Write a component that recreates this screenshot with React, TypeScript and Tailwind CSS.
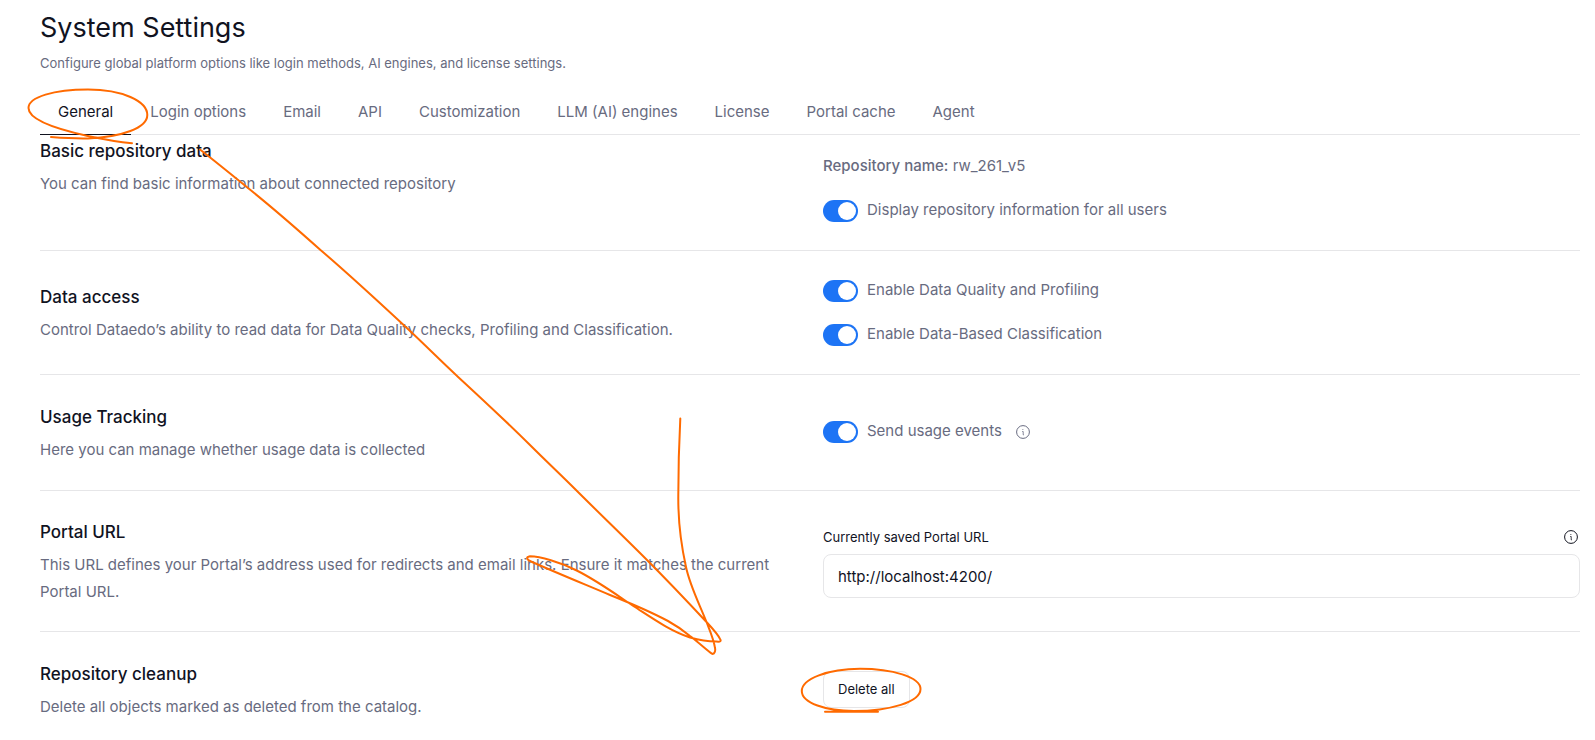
import { useState, type ReactNode } from 'react';

const tabs = [
  'General',
  'Login options',
  'Email',
  'API',
  'Customization',
  'LLM (AI) engines',
  'License',
  'Portal cache',
  'Agent',
];

function InfoIcon() {
  return (
    <svg viewBox="0 0 14 14" className="size-[14px] shrink-0" fill="none" aria-hidden="true">
      <circle cx="7" cy="7" r="6.4" stroke="currentColor" strokeWidth="1" />
      <path d="M6.2 6.5H7.2V9.8H8" stroke="currentColor" strokeWidth="0.8" />
      <circle cx="6.9" cy="4.4" r="0.5" fill="currentColor" />
    </svg>
  );
}

function Toggle({ label, info }: { label: string; info?: boolean }) {
  const [on, setOn] = useState(true);
  return (
    <div className="flex items-center gap-[14px]">
      <label className="flex cursor-pointer items-center gap-[9px]">
        <input
          type="checkbox"
          role="switch"
          checked={on}
          onChange={() => setOn(!on)}
          className="peer sr-only"
        />
        <span className="flex h-[22px] w-[35px] items-center rounded-full bg-[#c5c7d0] p-[2px] peer-checked:justify-end peer-checked:bg-[#1d74f5]">
          <span className="size-[18px] rounded-full bg-white" />
        </span>
        <span className="h-[27px] leading-[25px]">{label}</span>
      </label>
      {info && <InfoIcon />}
    </div>
  );
}

function SectionText({ title, children }: { title: string; children: ReactNode }) {
  return (
    <div>
      <h2 className="mb-1 text-[17px] leading-[30px] font-medium text-[#11131f]">{title}</h2>
      <p className="leading-[27px]">{children}</p>
    </div>
  );
}

function Section({ title, text, children }: { title: string; text: string; children: ReactNode }) {
  return (
    <section className="grid grid-cols-2 items-center gap-x-[26px] border-b border-[#e6e6e8] py-[26px] last:border-b-0 last:pt-[27px]">
      <SectionText title={title}>{text}</SectionText>
      {children}
    </section>
  );
}

function Annotations() {
  return (
    <svg
      width="1595"
      height="740"
      viewBox="0 0 1595 740"
      className="pointer-events-none absolute top-0 left-0 max-w-none"
      fill="none"
      stroke="#ff6a00"
      strokeWidth="2"
      strokeLinecap="round"
      strokeLinejoin="round"
      aria-hidden="true"
    >
      <path d="M51 137C64 138 76 138.7 88 138.4C122 137 147.3 128 147.3 115C147.3 101 122 89.5 88 89.5C54 89.5 28.5 97 28.5 108C28.5 119 52 128 86.7 135.7C102 139 118 142 132 143.2" />
      <path d="M200 149.5C216 162 232 175 248 188C273 208 297 229 320.5 250C351 276 380 303 409 330C425 345 440 360 455.5 374.5C481 398 506 421 530 445C545 460 561 475 576 490C599 513 622 535 645 558C666 579 686 600 706.5 622C714 630 719 636 720.6 640C721 642 719 641.8 716 641.6C708 641.5 699 640 690 637.5C670 631 652 618 633.3 606C614 593 596 580 576.7 570.5C560 562 540 556.5 530 556.3C526 557 526 559.5 531 561.5C557 573 584 584 610 595C630 603 651 612 668 621C677 626 684 631 690 636C698 642 708 651 712 653.8C715 654.5 715.5 650 715 648C714 640 710 631 706.5 622C699 603 690 586 686 567C680 540 678 520 678.3 495C678.3 470 679 444 680.3 418.5" />
      <path d="M825 711.8H878M854 711C826 711 801.8 703 801.8 691C801.8 679 828 668.8 860 668.8C892 668.8 920.5 677 920.5 689C920.5 702 890 711 854 711" />
    </svg>
  );
}

export default function App() {
  const [active, setActive] = useState('General');
  return (
    <div className="relative min-h-screen overflow-hidden bg-white pr-[15px] pl-10 font-[Inter,sans-serif] text-[15px] text-[#686b80]">
      <header className="pt-2">
        <h1 className="text-[27px] leading-10 text-[#11131f]">System Settings</h1>
        <p className="mt-[3px] text-[13px] leading-6">
          Configure global platform options like login methods, AI engines, and license settings.
        </p>
      </header>

      <nav role="tablist" className="mt-[9px] flex gap-px border-b border-[#e6e6e8]">
        {tabs.map((tab) => (
          <button
            key={tab}
            type="button"
            role="tab"
            aria-selected={tab === active}
            onClick={() => setActive(tab)}
            className="-mb-px h-[51px] cursor-pointer border-b border-transparent px-[18px] pt-[6px] whitespace-nowrap aria-selected:border-[#11131f] aria-selected:text-[#11131f]"
          >
            {tab}
          </button>
        ))}
      </nav>

      <main>
        <section className="grid grid-cols-2 items-start gap-x-[26px] border-b border-[#e6e6e8] pt-px pb-[26px]">
          <SectionText title="Basic repository data">
            You can find basic information about connected repository
          </SectionText>
          <div className="flex flex-col gap-[17px] pt-[17px]">
            <p className="h-[27px] leading-[25px]">
              <span className="font-medium">Repository name:</span> rw_261_v5
            </p>
            <Toggle label="Display repository information for all users" />
          </div>
        </section>

        <Section
          title="Data access"
          text="Control Dataedo’s ability to read data for Data Quality checks, Profiling and Classification."
        >
          <div className="flex flex-col gap-[17px]">
            <Toggle label="Enable Data Quality and Profiling" />
            <Toggle label="Enable Data-Based Classification" />
          </div>
        </Section>

        <Section title="Usage Tracking" text="Here you can manage whether usage data is collected">
          <div className="mb-[2px] flex h-[61px] items-center">
            <Toggle label="Send usage events" info />
          </div>
        </Section>

        <Section
          title="Portal URL"
          text="This URL defines your Portal’s address used for redirects and email links. Ensure it matches the current Portal URL."
        >
          <div className="text-[#11131f]">
            <div className="mb-1 flex items-center justify-between pr-[2px]">
              <label htmlFor="portal-url" className="text-[13px] leading-[26px]">
                Currently saved Portal URL
              </label>
              <InfoIcon />
            </div>
            <input
              id="portal-url"
              type="text"
              defaultValue="http://localhost:4200/"
              className="h-11 w-full rounded-lg border border-[#e6e6e8] px-[14px] outline-none"
            />
          </div>
        </Section>

        <Section title="Repository cleanup" text="Delete all objects marked as deleted from the catalog.">
          <div>
            <button
              type="button"
              className="block h-[37px] cursor-pointer rounded-lg border border-[#e6e6e8] px-[14px] pt-px text-[13px] text-[#11131f]"
            >
              Delete all
            </button>
          </div>
        </Section>
      </main>

      <Annotations />
    </div>
  );
}
